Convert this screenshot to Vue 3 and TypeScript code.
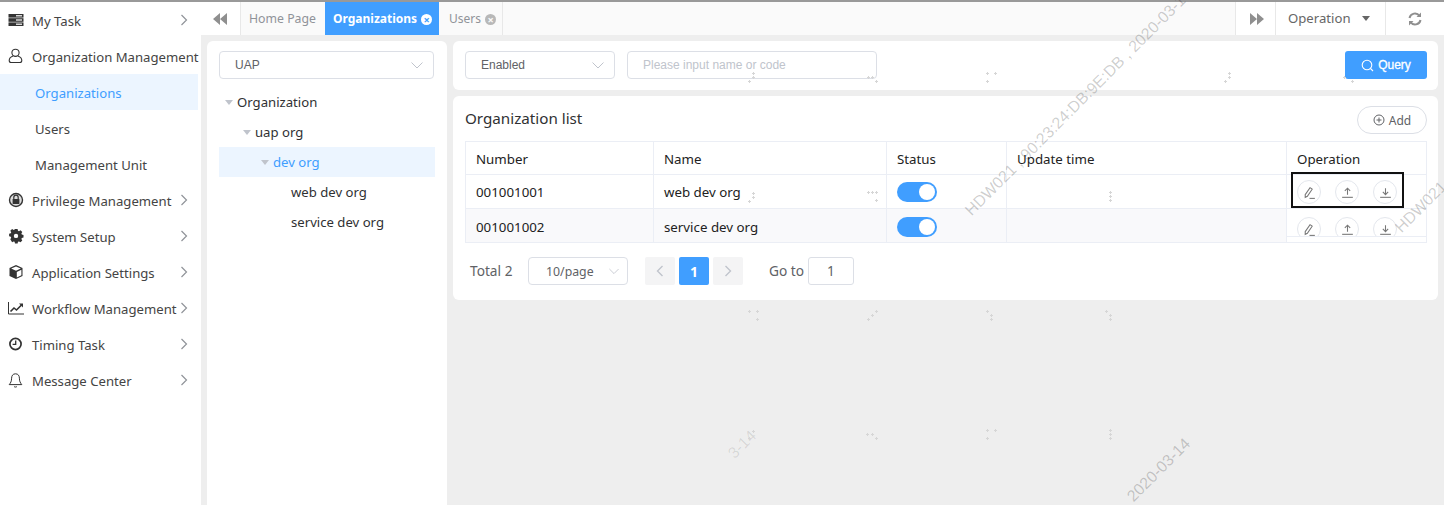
<script setup lang="ts">
import { ref } from 'vue'

interface MenuItem {
  label: string
  icon: string
  open?: boolean
  children?: { label: string; active?: boolean }[]
}

const menu: MenuItem[] = [
  { label: 'My Task', icon: 'task' },
  {
    label: 'Organization Management',
    icon: 'user',
    open: true,
    children: [
      { label: 'Organizations', active: true },
      { label: 'Users' },
      { label: 'Management Unit' },
    ],
  },
  { label: 'Privilege Management', icon: 'lock' },
  { label: 'System Setup', icon: 'gear' },
  { label: 'Application Settings', icon: 'cube' },
  { label: 'Workflow Management', icon: 'chart' },
  { label: 'Timing Task', icon: 'clock' },
  { label: 'Message Center', icon: 'bell' },
]

const rows = ref([
  { number: '001001001', name: 'web dev org' },
  { number: '001001002', name: 'service dev org' },
])

// little specks left by the watermark layer
const specks = [
  [749, 311], [757, 311], [757, 319], [876, 311], [872, 315], [868, 319],
  [987, 311], [991, 315], [991, 319], [1106, 311], [1110, 315], [1110, 319],
  [867, 434], [872, 434], [876, 438], [987, 430], [995, 430], [987, 438],
  [1110, 430], [1110, 434], [1110, 438], [987, 73], [995, 73], [987, 81],
  [1110, 192], [1110, 196], [1110, 200], [1229, 73], [1229, 77], [1225, 81],
  [1344, 77], [1352, 81], [753, 73], [753, 77], [749, 81], [868, 77],
  [872, 77], [876, 81], [868, 192], [872, 192], [876, 192], [876, 200],
  [753, 193], [753, 197], [749, 201], [753, 431], [749, 438],
]
const speckPath = specks
  .map(([x, y]) => `M${x - 1} ${y + 0.5}h3M${x + 0.5} ${y - 1}v3`)
  .join('')
</script>

<template>
  <div class="page">
    <div class="topline"></div>
    <div class="main">
      <aside class="sidebar">
        <template v-for="item in menu" :key="item.label">
          <div class="menu-item">
            <svg class="menu-icon" viewBox="0 0 16 16">
              <g v-if="item.icon === 'task'" fill="#333">
                <rect x="0.5" y="2" width="15" height="3.6" />
                <rect x="0.5" y="6.2" width="15" height="3.6" />
                <rect x="0.5" y="10.4" width="15" height="3.6" />
                <rect x="8" y="3.2" width="6" height="1.2" fill="#fff" />
                <rect x="8" y="7.4" width="6" height="1.2" fill="#fff" />
                <rect x="8" y="11.6" width="6" height="1.2" fill="#fff" />
              </g>
              <g v-else-if="item.icon === 'user'" fill="none" stroke="#333" stroke-width="1.1">
                <circle cx="7.5" cy="4.8" r="3.6" />
                <path d="M5 8C2.8 8.8 1.2 10.4 1.2 12.5c0 1.3.9 2 2 2h8.6c1.1 0 2-.7 2-2 0-2.1-1.6-3.7-3.8-4.5" />
              </g>
              <g v-else-if="item.icon === 'lock'">
                <circle cx="8" cy="8" r="7.2" fill="#333" />
                <circle cx="8" cy="8" r="5.8" fill="#ddd" />
                <path d="M5.8 7V5.4a2.2 2.2 0 0 1 4.4 0V7" fill="none" stroke="#333" stroke-width="1.2" />
                <rect x="4.6" y="7" width="6.8" height="5" rx="0.6" fill="#333" />
              </g>
              <g v-else-if="item.icon === 'gear'">
                <path
                  fill="#333"
                  d="M6.7 2h2.6l.4 1.700 1 .4 1.500-.9 1.800 1.800-.9 1.500.4 1 1.700.4v2.600l-1.700.4-.4 1 .9 1.500-1.800 1.800-1.500-.9-1 .4-.4 1.700H6.700l-.4-1.700-1-.4-1.500.9L2 12.100l.9-1.500-.4-1L.8 9.200V6.600l1.700-.4.4-1L2 3.700l1.800-1.800 1.500.9 1-.4z"
                  transform="translate(0.3 -0.9)"
                />
                <circle cx="8" cy="7.9" r="2.2" fill="#fff" />
              </g>
              <g v-else-if="item.icon === 'cube'">
                <path d="M8 1l6.5 3v8L8 15l-6.500-3V4z" fill="#333" />
                <path d="M8 2.4l4.800 2.200L8 6.800 3.200 4.600z" fill="#fff" />
                <path d="M8.800 8l4.600-2.200v5.500L8.800 13.500z" fill="#fff" />
              </g>
              <g v-else-if="item.icon === 'chart'" fill="none" stroke="#333">
                <path d="M.5 2v12h15.500" stroke-width="1" />
                <path d="M2.500 11.500l3.500-3.500 2.500 2 5-5" stroke-width="1.6" />
                <path d="M11 3.600h4v4z" fill="#333" stroke="none" />
              </g>
              <g v-else-if="item.icon === 'clock'" fill="none" stroke="#333">
                <circle cx="7.5" cy="8" r="5.6" stroke-width="1.7" />
                <path d="M7.700 4.400v4H4.600" stroke-width="1.3" />
              </g>
              <g v-else fill="none" stroke="#333" stroke-width="1">
                <path d="M7.500 1.800c-2.700 0-3.900 2-3.900 4.400 0 3-.9 4.700-2.400 6.400h12.600c-1.500-1.700-2.400-3.400-2.400-6.400 0-2.400-1.200-4.400-3.900-4.400z" />
                <path d="M6 14.300c.6 1 2.400 1 3 0" />
              </g>
            </svg>
            <span class="menu-label">{{ item.label }}</span>
            <svg v-if="!item.open" class="menu-arrow" viewBox="0 0 8 12">
              <path d="M1.500 1l5 5-5 5" fill="none" stroke="#909399" stroke-width="1.2" />
            </svg>
          </div>
          <template v-if="item.children">
            <div
              v-for="child in item.children"
              :key="child.label"
              class="submenu-item"
              :class="{ active: child.active }"
            >
              {{ child.label }}
            </div>
          </template>
        </template>
      </aside>

      <div class="content">
        <header class="tabs">
          <div class="tab-btn left-btn">
            <svg width="14" height="12" viewBox="0 0 14 12"><path d="M7 0v12L0 6zM14 0v12L7 6z" fill="#8f8f8f" /></svg>
          </div>
          <div class="tab home">Home Page</div>
          <div class="tab current">
            Organizations
            <span class="tab-close">×</span>
          </div>
          <div class="tab closable">
            Users
            <span class="tab-close">×</span>
          </div>
          <div class="tab-fill"></div>
          <div class="tab-btn right-btn">
            <svg width="14" height="12" viewBox="0 0 14 12"><path d="M0 0v12l7-6zM7 0v12l7-6z" fill="#8f8f8f" /></svg>
          </div>
          <div class="tab-op">Operation <i class="caret"></i></div>
          <div class="tab-refresh">
            <svg width="14" height="14" viewBox="0 0 14 14" fill="none" stroke="#8f8f8f" stroke-width="2">
              <path d="M1.500 6a5.500 5.500 0 0 1 10-2" />
              <path d="M12.500 8a5.500 5.500 0 0 1-10 2" />
              <path d="M13 .5v4.500H8.500z" fill="#8f8f8f" stroke="none" />
              <path d="M1 13.500V9h4.500z" fill="#8f8f8f" stroke="none" />
            </svg>
          </div>
        </header>

        <div class="body">
          <section class="tree-panel">
            <div class="select tree-select">
              <span>UAP</span>
              <svg class="chevron" viewBox="0 0 12 7"><path d="M.5.5L6 6l5.500-5.500" fill="none" stroke="#c0c4cc" /></svg>
            </div>
            <div class="tree">
              <div class="tree-node"><i class="tree-caret"></i>Organization</div>
              <div class="tree-node lvl1"><i class="tree-caret"></i>uap org</div>
              <div class="tree-node lvl2 selected"><i class="tree-caret"></i>dev org</div>
              <div class="tree-node lvl3">web dev org</div>
              <div class="tree-node lvl3">service dev org</div>
            </div>
          </section>

          <div class="right">
            <section class="filter-panel">
              <div class="select status-select">
                <span>Enabled</span>
                <svg class="chevron" viewBox="0 0 12 7"><path d="M.5.5L6 6l5.500-5.500" fill="none" stroke="#c0c4cc" /></svg>
              </div>
              <input class="search" placeholder="Please input name or code" />
              <button class="query">
                <svg width="13" height="13" viewBox="0 0 13 13" fill="none" stroke="#fff" stroke-width="1.1">
                  <circle cx="6" cy="6" r="4.8" />
                  <path d="M9.500 9.500l2.500 2.500" />
                </svg>
                Query
              </button>
            </section>

            <section class="list-panel">
              <div class="list-head">
                <h2>Organization list</h2>
                <button class="add">
                  <svg width="12" height="12" viewBox="0 0 12 12" fill="none" stroke="#606266">
                    <circle cx="6" cy="6" r="5" />
                    <path d="M6 3.500v5M3.500 6h5" />
                  </svg>
                  Add
                </button>
              </div>

              <div class="table">
                <div class="tr head">
                  <div class="td c-number">Number</div>
                  <div class="td c-name">Name</div>
                  <div class="td c-status">Status</div>
                  <div class="td c-time">Update time</div>
                  <div class="td c-op">Operation</div>
                </div>
                <div v-for="(row, i) in rows" :key="row.number" class="tr" :class="{ striped: i === 1 }">
                  <div class="td c-number">{{ row.number }}</div>
                  <div class="td c-name">{{ row.name }}</div>
                  <div class="td c-status"><span class="switch"></span></div>
                  <div class="td c-time"></div>
                  <div class="td c-op op-cell">
                    <div class="ops">
                      <span class="op-btn">
                        <svg viewBox="0 0 14 14" fill="none" stroke="#777">
                          <path d="M3 9l4.500-6.500 2 1.400L5 10.500l-2 1z" />
                          <path d="M7 12.500h5" />
                        </svg>
                      </span>
                      <span class="op-btn">
                        <svg viewBox="0 0 14 14" fill="none" stroke="#777">
                          <path d="M7 3v6M4.500 5.500L7 3l2.500 2.500" />
                          <path d="M2 11.500h10" />
                        </svg>
                      </span>
                      <span class="op-btn">
                        <svg viewBox="0 0 14 14" fill="none" stroke="#777">
                          <path d="M7 3v6M4.500 6.500L7 9l2.500-2.500" />
                          <path d="M2 11.500h10" />
                        </svg>
                      </span>
                    </div>
                  </div>
                </div>
                <div class="highlight"></div>
              </div>

              <div class="pager">
                <span class="total">Total 2</span>
                <div class="select size-select">
                  <span>10/page</span>
                  <svg class="chevron" viewBox="0 0 12 7"><path d="M.5.5L6 6l5.500-5.500" fill="none" stroke="#c0c4cc" /></svg>
                </div>
                <button class="page-btn first">
                  <svg width="8" height="12" viewBox="0 0 8 12"><path d="M6.500 1l-5 5 5 5" fill="none" stroke="#c0c4cc" stroke-width="1.4" /></svg>
                </button>
                <button class="page-btn on">1</button>
                <button class="page-btn">
                  <svg width="8" height="12" viewBox="0 0 8 12"><path d="M1.500 1l5 5-5 5" fill="none" stroke="#c0c4cc" stroke-width="1.4" /></svg>
                </button>
                <span class="goto">Go to</span>
                <div class="goto-input">1</div>
              </div>
            </section>
          </div>
        </div>
      </div>
    </div>

    <div class="watermarks">
      <span class="wm wm-main">HDW021 , 90:23:24:DB:9E:DB , 2020-03-14</span>
      <span class="wm wm-side">HDW021</span>
      <span class="wm wm-date">2020-03-14</span>
      <span class="wm wm-faint">3-14</span>
      <svg class="specks" width="1444" height="505" viewBox="0 0 1444 505">
        <path :d="speckPath" stroke="#d6d6d6" fill="none" shape-rendering="crispEdges" />
      </svg>
    </div>
  </div>
</template>

<style>
html,
body {
  margin: 0;
  background: #fff;
}
</style>

<style scoped>
.page {
  position: relative;
  width: 1444px;
  height: 505px;
  overflow: hidden;
  background: #eee;
  font-family: "Noto Sans", "Open Sans", sans-serif;
  font-size: 13.15px;
  color: #303133;
}

.topline {
  height: 2px;
  background: #999;
}

.main {
  display: flex;
  height: 503px;
}

.sidebar {
  width: 201px;
  flex: none;
  background: #fff;
  padding-right: 3px;
  box-sizing: border-box;
}

.menu-item {
  position: relative;
  display: flex;
  align-items: center;
  height: 36px;
  padding-left: 8px;
  color: #444;
  white-space: nowrap;
}

.menu-label {
  padding-top: 2px;
}

.menu-icon {
  width: 16px;
  height: 16px;
  margin-right: 8px;
  flex: none;
}

.menu-arrow {
  position: absolute;
  left: 180px;
  top: 12px;
  width: 8px;
  height: 12px;
}

.submenu-item {
  height: 36px;
  line-height: 38px;
  padding-left: 35px;
  color: #444;
  box-sizing: border-box;
}

.submenu-item.active {
  background: #ecf5ff;
  color: #409eff;
}

.content {
  flex: 1;
  display: flex;
  flex-direction: column;
  min-width: 0;
}

.tabs {
  display: flex;
  height: 33px;
  background: #fafafa;
  color: #909399;
  font-size: 12.3px;
  line-height: 33px;
  flex: none;
}

.tab-btn {
  display: flex;
  align-items: center;
  justify-content: center;
  background: #fff;
  width: 40px;
  box-sizing: border-box;
}

.left-btn {
  border-right: 1px solid #e8e8e8;
  padding-right: 2px;
}

.right-btn {
  border-left: 1px solid #e8e8e8;
  padding-left: 3px;
}

.tab {
  box-sizing: border-box;
  white-space: nowrap;
}

.home {
  width: 84px;
  padding-left: 8px;
}

.tab.current {
  width: 114px;
  padding-left: 8px;
  background: #409eff;
  color: #fff;
  font-weight: 700;
  font-size: 12px;
}

.tab.closable {
  width: 64px;
  padding-left: 10px;
  font-size: 12px;
  border-right: 1px solid #e8e8e8;
}

.tab-close {
  display: inline-block;
  width: 11px;
  height: 11px;
  margin-left: 1px;
  border-radius: 50%;
  background: #b8b8b8;
  color: #fafafa;
  font-size: 11px;
  line-height: 11px;
  text-align: center;
  font-weight: 700;
  vertical-align: -1px;
}

.current .tab-close {
  background: #fff;
  color: #409eff;
}

.tab-fill {
  flex: 1;
}

.tab-op {
  width: 111px;
  box-sizing: border-box;
  background: #fff;
  color: #666;
  font-size: 13.15px;
  border-left: 1px solid #e8e8e8;
  border-right: 1px solid #e8e8e8;
  padding-left: 12px;
}

.caret {
  display: inline-block;
  border: 4px solid transparent;
  border-top: 5px solid #666;
  border-bottom: 0;
  margin-left: 8px;
  vertical-align: 2px;
}

.tab-refresh {
  width: 58px;
  background: #fff;
  display: flex;
  align-items: center;
  justify-content: center;
}

.body {
  display: flex;
  padding: 6px 6px 0;
  gap: 6px;
  flex: 1;
  min-height: 0;
}

.tree-panel {
  width: 240px;
  box-sizing: border-box;
  flex: none;
  background: #fff;
  border-radius: 6px 6px 0 0;
  padding: 10px 12px;
}

.select {
  display: flex;
  align-items: center;
  justify-content: space-between;
  box-sizing: border-box;
  height: 28px;
  border: 1px solid #dcdfe6;
  border-radius: 4px;
  background: #fff;
  padding: 0 10px 0 15px;
  color: #606266;
  font-size: 12px;
  font-family: "Liberation Sans", Arial, sans-serif;
}

.chevron {
  width: 12px;
  height: 7px;
}

.tree-select {
  width: 215px;
}

.tree {
  margin-top: 8px;
}

.tree-node {
  height: 30px;
  display: flex;
  align-items: center;
  color: #303133;
}

.tree-caret {
  width: 0;
  height: 0;
  margin: 0 4px 0 6px;
  border: 4px solid transparent;
  border-top: 5px solid #c0c4cc;
  border-bottom: 0;
}

.lvl1 {
  padding-left: 18px;
}

.lvl2 {
  padding-left: 36px;
}

.lvl3 {
  padding-left: 72px;
}

.selected {
  background: #ecf5ff;
  color: #409eff;
}

.right {
  flex: 1;
  min-width: 0;
  display: flex;
  flex-direction: column;
  gap: 6px;
}

.filter-panel {
  display: flex;
  align-items: flex-start;
  height: 49px;
  box-sizing: border-box;
  background: #fff;
  border-radius: 6px;
  padding: 10px 11px 0 12px;
}

.status-select {
  width: 150px;
}

.search {
  width: 250px;
  height: 28px;
  box-sizing: border-box;
  margin-left: 12px;
  border: 1px solid #dcdfe6;
  border-radius: 4px;
  padding: 0 15px;
  font-size: 12px;
  font-family: "Liberation Sans", Arial, sans-serif;
}

.search::placeholder {
  color: #c0c4cc;
}

.query {
  margin-left: auto;
  display: flex;
  align-items: center;
  justify-content: center;
  gap: 4px;
  width: 82px;
  height: 28px;
  border: 0;
  border-radius: 3px;
  background: #409eff;
  color: #fff;
  font-size: 12px;
  font-family: "Liberation Sans", Arial, sans-serif;
  -webkit-text-stroke: 0.3px #fff;
}

.list-panel {
  height: 204px;
  box-sizing: border-box;
  background: #fff;
  border-radius: 6px;
  padding: 10px 11px 0 12px;
}

.list-head {
  display: flex;
  align-items: center;
  justify-content: space-between;
  height: 28px;
  margin-bottom: 7px;
}

.list-head h2 {
  margin: 0;
  padding-bottom: 5px;
  font-size: 15.2px;
  font-weight: 400;
  color: #303133;
}

.add {
  display: flex;
  align-items: center;
  justify-content: center;
  gap: 4px;
  width: 70px;
  height: 28px;
  border: 1px solid #dcdfe6;
  border-radius: 14px;
  background: #fff;
  color: #606266;
  font-size: 12px;
  font-family: inherit;
}

.table {
  position: relative;
  border-top: 1px solid #ebeef5;
  border-left: 1px solid #ebeef5;
  font-size: 13.3px;
}

.tr {
  display: flex;
  height: 34px;
  box-sizing: border-box;
}

.tr.head {
  height: 33px;
}

.tr.head .td {
  padding-top: 2px;
}

.tr.striped .td {
  padding-top: 2px;
}

.td {
  box-sizing: border-box;
  flex: none;
  border-right: 1px solid #ebeef5;
  border-bottom: 1px solid #ebeef5;
  padding-left: 10px;
  display: flex;
  align-items: center;
  color: #222;
}

.striped .td {
  background: #f9f9fb;
}

.c-number {
  width: 188px;
}

.c-name {
  width: 233px;
}

.c-status {
  width: 120px;
}

.c-time {
  width: 280px;
}

.c-op {
  width: 140px;
}

.td.op-cell {
  display: block;
  padding: 0;
}

.striped .op-cell {
  background: #fff;
}

.ops {
  display: flex;
  gap: 14px;
  height: 33px;
  padding: 5px 0 0 10px;
  box-sizing: border-box;
  overflow: hidden;
}

.striped .ops {
  height: 26px;
  padding-top: 6px;
  border-bottom: 1px solid #ebeef5;
}

.op-btn {
  display: inline-flex;
  align-items: center;
  justify-content: center;
  width: 24px;
  height: 24px;
  flex: none;
  border: 1px solid #e4e7ed;
  border-radius: 50%;
  box-sizing: border-box;
  background: #fff;
}

.op-btn svg {
  width: 15px;
  height: 15px;
}

.switch {
  position: relative;
  display: block;
  width: 40px;
  height: 20px;
  border-radius: 10px;
  background: #409eff;
}

.switch::after {
  content: "";
  position: absolute;
  right: 2px;
  top: 2px;
  width: 16px;
  height: 16px;
  border-radius: 50%;
  background: #fff;
}

.highlight {
  position: absolute;
  left: 825px;
  top: 30px;
  width: 113px;
  height: 36px;
  box-sizing: border-box;
  border: 2px solid #111;
  pointer-events: none;
}

.pager {
  display: flex;
  align-items: center;
  margin-top: 14px;
  height: 28px;
  padding-left: 5px;
  color: #606266;
  font-size: 13.7px;
}

.total {
  width: 58px;
  padding-bottom: 1px;
}

.size-select {
  width: 100px;
  font-family: inherit;
  font-size: 12.3px;
  padding: 0 8px 0 17px;
}

.size-select .chevron {
  width: 10px;
}

.page-btn {
  width: 30px;
  height: 28px;
  margin-right: 4px;
  border: 0;
  border-radius: 2px;
  background: #f4f4f5;
  display: flex;
  align-items: center;
  justify-content: center;
  padding: 0;
}

.page-btn.first {
  margin-left: 17px;
}

.page-btn.on {
  background: #409eff;
  color: #fff;
  font-weight: 700;
  font-size: 14px;
  font-family: inherit;
}

.goto {
  margin-left: 22px;
  width: 39px;
  padding-bottom: 1px;
}

.goto-input {
  width: 46px;
  height: 28px;
  box-sizing: border-box;
  border: 1px solid #dcdfe6;
  border-radius: 3px;
  text-align: center;
  line-height: 26px;
}

.watermarks {
  position: absolute;
  inset: 0;
  pointer-events: none;
}

.wm {
  position: absolute;
  transform: rotate(-45deg);
  transform-origin: 0 50%;
  font-family: "Liberation Sans", sans-serif;
  font-size: 16px;
  line-height: 18px;
  color: rgba(0, 0, 0, 0.2);
  white-space: nowrap;
}

.wm-main {
  left: 968px;
  top: 204px;
}

.wm-side {
  left: 1398px;
  top: 221px;
}

.wm-date {
  left: 1130px;
  top: 490px;
}

.wm-faint {
  left: 731px;
  top: 447px;
  color: rgba(0, 0, 0, 0.1);
}

.specks {
  position: absolute;
  left: 0;
  top: 0;
}
</style>
